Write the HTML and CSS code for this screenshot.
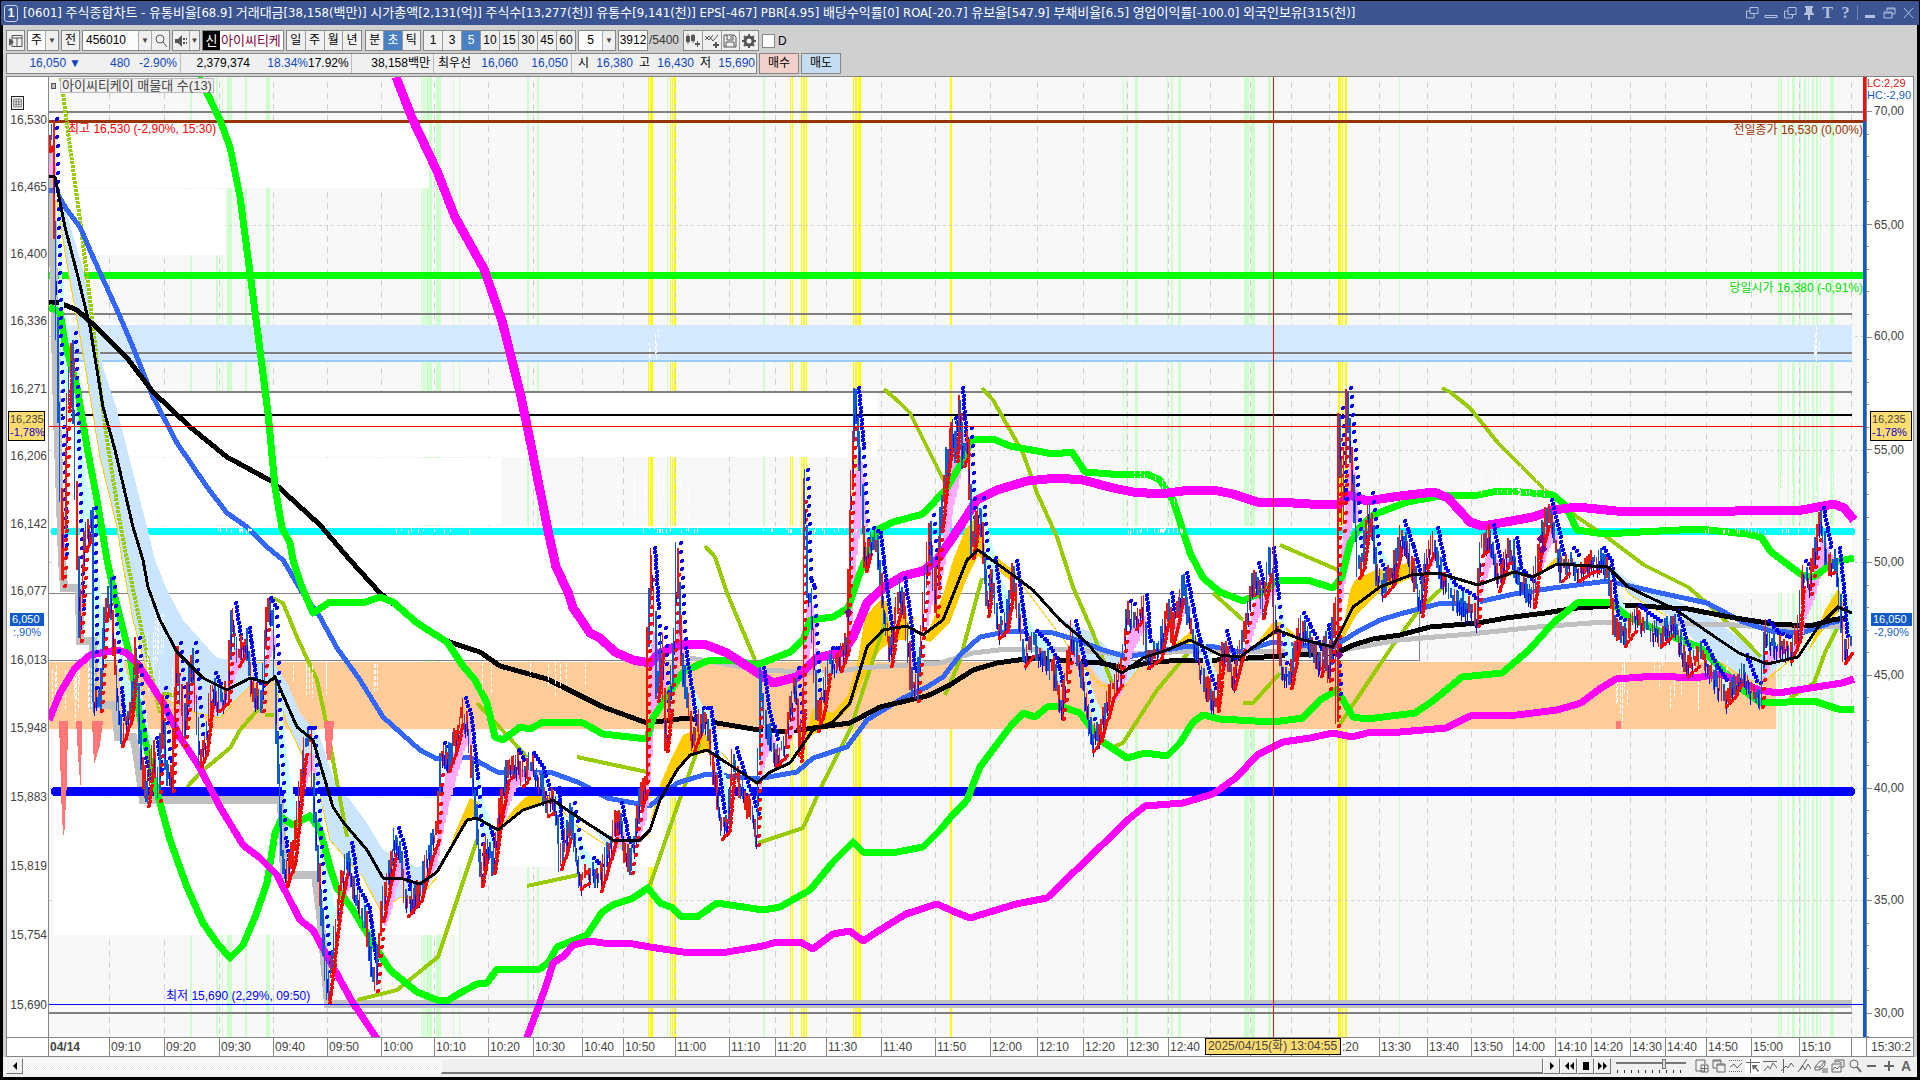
FILE: index.html
```html
<!DOCTYPE html>
<html lang="ko">
<head>
<meta charset="utf-8">
<title>[0601] 주식종합차트</title>
<link rel="stylesheet" href="styles.css">
</head>
<body>
<div class="window">
  <header class="titlebar">
    <span class="badge">1</span>
    <h1>[0601] 주식종합차트 - 유통비율[68.9] 거래대금[38,158(백만)] 시가총액[2,131(억)] 주식수[13,277(천)] 유통수[9,141(천)] EPS[-467] PBR[4.95] 배당수익률[0] ROA[-20.7] 유보율[547.9] 부채비율[6.5] 영업이익률[-100.0] 외국인보유[315(천)]</h1>
    <div class="winbtns">
      <button aria-label="창 분리"><svg viewBox="0 0 14 14"><path d="M5 1.500h8v6H5zM9 7v5H1.500V5H5"/></svg></button>
      <button aria-label="숨김"><svg viewBox="0 0 14 14"><path d="M1 9.500h12v2H1z"/></svg></button>
      <button aria-label="복사"><svg viewBox="0 0 14 14"><path d="M5 1.500h8v7H5zM1.500 5v7h8V9M1.500 5H5"/></svg></button>
      <button aria-label="고정"><svg viewBox="0 0 14 14"><path class="solid" d="M3 0h8v2h-1v4l2 2v1H2V8l2-2V2H3zM6 9h2v5H6z"/></svg></button>
      <button class="glyph" aria-label="글꼴">T</button>
      <button class="glyph" aria-label="도움말">?</button>
      <i></i>
      <button aria-label="최소화"><svg viewBox="0 0 14 14"><path class="solid" d="M2 9h10v3H2z"/></svg></button>
      <button aria-label="이전 크기"><svg viewBox="0 0 14 14"><path d="M5 5V2h8v6h-3M2 6h8v6H2zM2 7h8M5 3h8"/></svg></button>
      <button aria-label="닫기"><svg viewBox="0 0 14 14"><path d="M3 2l9 10M12 2L3 12"/></svg></button>
    </div>
  </header>

  <main class="body">
    <div class="toolbar">
      <button class="box ic w20" aria-label="패널"><svg viewBox="0 0 16 16"><path d="M4 2.500h10v11H4zM4 5h10M9 5v8"/><path class="solid" d="M1 5l5 4-5 4z"/></svg></button>
      <div class="box split w32"><span>주</span><button class="drop" aria-label="주기 선택">▼</button></div>
      <button class="box w20">전</button>
      <div class="box split w88"><input class="code" value="456010" aria-label="종목코드"><button class="drop" aria-label="종목 목록">▼</button><button class="ic find" aria-label="종목 찾기"><svg viewBox="0 0 16 16"><circle cx="7" cy="6" r="4"/><path d="M10 9l4 5"/></svg></button></div>
      <div class="box split w28"><button class="ic sound" aria-label="음성"><svg viewBox="0 0 16 16"><path class="solid" d="M2 6h3l4-4v12L5 10H2zM10 5h2v2h-2zM13 5h1v2h-1zM10 9h2v2h-2zM13 9h1v2h-1z"/></svg></button><button class="drop" aria-label="음성 설정">▼</button></div>
      <div class="box name"><b>신</b><span>아이씨티케</span></div>
      <div class="box seg w76"><button>일</button><button>주</button><button>월</button><button>년</button></div>
      <div class="box seg w56 gap"><button>분</button><button class="on">초</button><button>틱</button></div>
      <div class="box seg w152"><button>1</button><button>3</button><button class="on">5</button><button>10</button><button>15</button><button>30</button><button>45</button><button>60</button></div>
      <div class="box split w38"><span>5</span><button class="drop" aria-label="간격 선택">▼</button></div>
      <input class="box count" value="3912" aria-label="조회 개수"><span class="total">/5400</span>
      <div class="box seg w76">
        <button class="ic" aria-label="종목 추가"><svg viewBox="0 0 16 16"><path class="solid" d="M1 3h4v6H1zM6 2h4v6H6zM10 10h5v2h-5zM12 8h1v6h-1z"/><path d="M3 1v10M8 1v9"/></svg></button>
        <button class="ic" aria-label="지표 추가"><svg viewBox="0 0 16 16"><path d="M1 7l4-4 4 5 5-6M1 3l4 4 4-5"/><path d="M9 12h6M12 9v6" stroke-width="2"/></svg></button>
        <button class="ic" aria-label="저장"><svg viewBox="0 0 16 16"><path d="M2 2h10l2 2v10H2zM5 2v5h6V2M4 14V9h8v5M9 3v3"/></svg></button>
        <button class="ic" aria-label="설정"><svg viewBox="0 0 16 16"><circle cx="8" cy="8" r="4" stroke-width="3"/><path d="M8 1v3M8 12v3M1 8h3M12 8h3M3 3l2 2M11 11l2 2M13 3l-2 2M3 13l2-2" stroke-width="2"/></svg></button>
      </div>
      <label class="dcheck"><input type="checkbox">D</label>
    </div>

    <div class="quote">
      <div class="box cells">
        <span class="q1 dn">16,050<i>▼</i></span><span class="q2 dn">480</span><span class="q2 dn sep">-2.90%</span>
        <span class="q3">2,379,374</span><span class="q4 dn">18.34%</span><span class="q5 sep">17.92%</span>
        <span class="q6 sep">38,158백만</span>
        <span class="q7">최우선</span><span class="q2 dn">16,060</span><span class="q8 dn sep">16,050</span>
        <span class="lab">시</span><span class="dn">16,380</span><span class="lab">고</span><span class="dn">16,430</span><span class="lab">저</span><span class="dn">15,690</span>
      </div>
      <button class="box trade buy">매수</button>
      <button class="box trade sell">매도</button>
    </div>

    <section class="chart">
      <div class="left-axis">
        <span><button class="grid-btn" aria-label="데이터 표"><svg viewBox="0 0 12 14"><path d="M1.500 2.500h9v9h-9zM1.500 5.500h9M1.500 8.500h9M4.500 2.500v9M7.500 2.500v9"/></svg></button></span>
        <span>16,530</span><span>16,465</span><span>16,400</span><span>16,336</span><span>16,271</span><span>16,206</span><span>16,142</span><span>16,077</span><span>16,013</span><span>15,948</span><span>15,883</span><span>15,819</span><span>15,754</span><span>15,690</span>
        <div class="tag cursor">16,235<em>-1,78%</em></div>
        <div class="tag now"><b>6,050</b><em>:,90%</em></div>
      </div>

      <div class="plot">
        <svg class="canvas" viewBox="49 77 1817 960" preserveAspectRatio="none" shape-rendering="crispEdges">
          <g id="stripes"></g>
          <g id="gridlines"></g>
          <g class="profile">
            <path d="M54 123h375v65H54zM54 189h171v66H54zM54 323h81v67H54zM54 392h823v65H54zM54 458h447v67H54zM54 526h1798v67H54zM49 594h1370v67H49zM54 729h698v68H54zM54 798h608v69H54zM54 867h405v68H54z"/>
          </g>
          <path fill="#d4e9ff" d="M54 325H1852V360H54z"/>
          <path fill="#fc9" d="M49 662H1776V729H49z"/>
          <g class="hl">
            <path stroke="#808080" stroke-width="2" d="M49 112H1863M54 314H1852M54 353H1852M54 392H1852M49 1013H1852"/>
            <path stroke="#99ccff" stroke-width="2" d="M54 361H1852"/>
            <path stroke="#808080" d="M49 593.500H1419.500V660.500H49"/>
            <path stroke="#930" stroke-width="3" d="M49 121.500H1863"/>
            <path stroke="#0f0" stroke-width="7" d="M49 275.500H1863"/>
            <path stroke="#000" stroke-width="2" d="M54 415H1852"/>
            <path stroke="#0ff" stroke-width="7" stroke-linecap="round" d="M54 531.500H1852"/>
          </g>
          <path class="low" d="M51 150L54 290L57 415L62 560L64 588H79L80 641H93V705H115L118 737H133L136 750L143 800H281L284 875H315L320 913L328 1004H1852"/>
          <g class="sky">
            <path d="M55 177L60 190L83 270L103 367L117 410L147 527L155 560L167 590L183 620L217 658L260 663H273L287 683L300 713L320 737L333 777L350 800L367 823L383 850L417 867L443 860L437 872L420 897L400 898L380 910L363 877L347 860L330 840L313 767L303 757L287 723L273 680L263 688L253 683L233 703L220 718L193 712L153 693L133 620L122 560L117 527L100 457L83 353L68 270z"/>
            <path d="M1060 618L1090 632L1110 650L1128 658L1140 668L1120 690L1100 680L1083 655z"/>
            <path d="M1610 565L1628 580L1676 600L1715 620L1739 638L1761 655L1785 658L1761 685L1735 672L1700 645L1665 612L1630 595z"/>
            <path d="M590 825L612 836L640 838L625 850L610 849z"/>
          </g>
          <g fill="#fc0">
            <path d="M443 865L455 833L470 798L478 802V818H467L437 872zM500 828L513 810L525 797L543 793L553 800L523 812zM650 822L660 785L672 757L683 735L700 728L712 742L707 752L690 757L677 772L660 802zM790 765L803 745L813 708L833 713L848 695L857 665L865 617L880 600L895 603L915 618L907 640L893 640L880 650L867 672L850 707L833 725L812 735zM925 640L943 595L953 560L965 530L975 518L985 545L1000 560L1018 574L1010 580L978 556L967 578L950 622L930 642zM1165 652L1190 632L1208 648L1190 643zM1256 644L1273 622H1280L1302 640L1277 634zM1340 645L1350 590L1355 580L1375 570L1395 568L1410 561L1424 572L1380 592L1357 614zM1495 582L1517 566L1533 576L1517 573zM1538 576L1557 556L1575 564H1557zM1808 652L1825 610L1838 589L1848 605L1838 612L1820 634z"/>
          </g>
          <g class="ma">
            <g stroke="#fc0" stroke-width="1"><path d="M55 190L68 270L83 353L100 457L117 527L122 560L133 620L153 693L193 712L220 718L233 703L253 683L263 688L273 680L287 723L303 757L313 767L330 840L347 860L363 877L380 910L400 898L420 897L437 877M553 800L575 825L612 849L650 835M712 742L730 762L757 785M1015 575L1060 635L1083 665L1100 685L1122 690L1147 658M1610 567L1630 595L1665 615L1700 650L1735 672L1761 685L1790 660"/></g>
            <g stroke="#99cc00" stroke-width="4">
              <path stroke-dasharray="3 1" d="M61 78L63 93L70 147L80 220L90 300L97 363L107 440L120 523L127 560L143 637L160 713"/>
              <path d="M162 694L175 695M187 787L200 773L230 748L240 730L260 707M265 715H274M273 598L283 603L297 637L317 680L325 717L333 760L347 837M357 1000L397 990L438 957L477 840M477 703L527 757M527 886L578 875M577 757L647 772M650 885L677 807L700 743M705 546L715 557L727 593L755 660M758 843L803 828L823 783L850 730L887 617M884 389L900 403L910 413L945 483M982 388L993 400L1023 453L1037 493L1057 537L1073 587L1093 633L1112 683M945 695L960 660L982 578M1113 747L1123 743L1157 690L1188 653M1213 593L1243 620M1243 703H1253L1280 673M1280 545L1338 570M1338 727L1393 645L1419 610L1442 588M1442 388L1450 392L1470 408L1498 443L1545 490L1577 517L1608 538L1644 565L1688 587L1715 610L1761 657M1790 698L1814 683L1826 650L1838 627"/>
            </g>
            <path stroke="silver" stroke-width="5" d="M690 658L760 670L827 673L860 668L940 663L973 653L1007 649H1067L1117 654L1200 651H1277L1343 650L1399 640L1470 634L1537 627L1604 622L1735 625L1774 628L1852 626"/>
            <path stroke="#36f" stroke-width="5" d="M49 190H55L67 210L80 227L93 257L117 310L133 347L153 397L177 443L207 487L227 513L247 527L267 547L283 560L302 592L320 617L337 648L360 680L383 717L420 750L437 759L470 757L497 772H550L580 783L607 798L650 806L677 783L707 774L757 779L797 772L813 758L847 747L867 720L903 698L927 687L943 677L960 655L980 637L1010 631L1053 633L1077 640L1103 650L1127 657L1183 647L1210 646L1240 652L1273 642L1293 645L1333 647L1357 632L1380 620L1400 614L1438 604L1478 602L1514 594L1553 588L1608 581L1656 592L1707 603L1743 622L1771 631L1802 633L1830 623L1852 618"/>
            <path stroke="#000" stroke-width="5" d="M49 302L60 303L77 310L97 328L127 358L153 392L190 427L227 457L273 482L320 525L350 560L380 593L417 623L443 640L480 652L500 666L547 679L603 707L647 723L687 718L753 729L787 732L820 727L850 723L880 707L927 696L950 685L973 670L997 663L1033 658L1100 663L1127 668L1147 663L1180 660L1217 660L1280 656L1337 653L1353 645L1373 639L1400 635L1430 627L1478 623L1506 618L1545 613L1577 608L1624 605L1688 609L1735 618L1774 624L1810 626L1832 620L1852 617"/>
            <path stroke="#00f" stroke-width="9" stroke-linecap="round" d="M55 791.500H1851"/>
          </g>
          <g id="ribbon"></g>
          <g class="ma" stroke="#0f0" stroke-width="7">
            <path d="M199 77L207 93L220 120L230 147L240 197L250 273L260 350L268 413L275 487L282 528L290 543L293 560L302 587L313 613L330 602L363 603L380 597L393 602L417 623L447 642L463 666L475 680L487 703L495 737L503 740L520 727L530 729L543 722L583 723L603 734L647 739L653 718L673 687L683 672L707 661L730 660L757 665L790 652L803 640L810 620L833 617L848 608L860 573L877 530L893 522L923 514L947 488L960 465L972 440L993 439L1010 446L1053 454L1072 452L1085 472L1123 475L1147 474L1160 480L1173 500L1190 553L1203 578L1220 592L1243 601L1260 593L1277 581L1307 580L1333 588L1342 577L1350 543L1360 527L1373 515L1407 502L1446 495H1478L1498 491L1521 492L1553 495L1565 505L1577 530L1604 534L1640 532L1699 529L1747 534L1761 537L1771 552L1802 575L1814 577L1834 562L1854 558"/>
            <path d="M49 307L60 312L65 343L77 387L87 447L97 500L107 560L115 597L130 657L140 717L153 777L170 840L187 887L203 923L217 943L230 958L243 945L255 917L267 883L275 833L282 818L293 825L310 816L320 830L330 867L337 888L353 910L373 943L390 970L417 992L437 1000L447 1001L460 993L477 984L487 983L497 969H540L548 963L557 947L587 935L602 912L613 905L633 898L648 888L660 903L673 908L680 916L697 917L717 903L763 910L780 907L810 890L833 862L853 842L863 852H897L923 847L940 830L950 818L967 800L980 767L1010 727L1023 713L1035 717L1047 707L1060 706L1080 713L1100 740L1127 758L1145 753L1167 756L1180 743L1193 722L1203 715L1220 719L1273 722L1303 718L1320 700L1337 690L1353 717L1367 719L1415 713L1434 700L1462 677L1502 673L1529 650L1553 623L1577 603L1610 602L1628 617L1668 635L1699 647L1723 670L1739 687L1761 703L1814 701L1838 709H1854"/>
          </g>
          <g id="sparks"></g>
          <g class="ma" stroke="#f0f">
            <path stroke-width="9" d="M396 77L412 118L437 171L455 217L484 269L502 321L520 392L530 440L540 490L549 535L556 567L568 592L573 608L580 618L590 633L600 638L615 652L633 660L650 663L660 653L682 644L707 645L727 653L753 670L773 683L797 677L817 658L843 652L853 637L867 603L883 588L903 576L923 571L937 560L953 537L977 500L997 490L1027 481L1057 478L1083 480L1113 488L1133 492L1160 494L1190 490H1213L1233 494L1257 502H1277L1310 504L1338 505L1350 495L1367 501L1400 496L1434 492L1448 498L1470 522L1482 526L1506 522L1533 517L1553 510L1577 507L1616 511L1711 512L1759 510H1802L1834 504L1844 508L1854 520"/>
            <path stroke-width="7" d="M49 720L60 693L75 668L90 655L117 650L127 653L140 667L163 703L180 737L200 768L220 807L243 845L260 858L277 875L300 920L313 930L333 967L353 1003L378 1040M526 1040L538 1008L547 983L553 963L565 955L573 945L590 941L603 943H627L650 947L683 952H727L763 946L777 942H800L813 949L833 934L850 931L863 941L880 930L906 914L937 904L955 912L970 918L1016 904L1047 898L1102 845L1130 818L1145 806L1183 803L1213 794L1237 777L1257 755L1283 742L1310 738L1333 733L1352 737L1367 733L1400 732L1446 728L1470 716L1517 715L1557 710L1581 703L1601 688L1616 679L1656 676L1695 678L1719 674L1739 681L1759 690L1778 693L1810 688L1842 683L1854 679"/>
          </g>
          <g id="candles"></g>
          <path class="thin" d="M49 176L55 177L65 227L78 277L90 327L103 407L115 450L133 527L143 560L148 587L160 620L177 652L203 678L227 690L250 678L267 683L275 677L297 727L313 740L333 807L343 822L367 850L383 878L403 879L420 884L437 872L467 820L477 818L498 830L523 810L553 800L570 812L593 827L613 840H640L650 830L660 800L677 770L690 755L707 750L727 763L757 783L770 772L790 763L813 730L833 722L850 703L867 647L883 630L907 626L923 635L943 620L967 560L978 550L1010 573L1033 590L1060 620L1087 643L1103 662L1122 673L1143 658L1167 650L1190 640L1220 655L1240 657L1277 630L1300 639L1333 647L1353 607L1380 587L1411 575L1438 573L1478 585L1514 572L1533 577L1557 564L1608 567L1628 587L1676 610L1715 637L1739 653L1767 664L1798 657L1818 627L1838 607L1852 613"/>
          <path fill="#f77" d="M59 721h9l-1 59-3 60-2-20zM76 721h6l-1 69-2-20zM92 721h11l-3 24-6 20zM324 721h10l-3 39h-4zM1616 721h5v8h-5z"/>
          <path fill="purple" d="M848 608l5 5h-3v4h-4v-4h-3zM1339 650l4 5-4 5-4-5zM1541 534l4 5-4 5-4-5zM1543 544l4 5-4 5-4-5z"/>
          <path stroke="#00f" d="M49 1004.500H1863"/>
          <path stroke="#f00" d="M49 426.500H1863M1273.500 77V1037"/>
          <path fill="#0f5bcc" d="M1863 77h3v960h-3z"/>
          <path fill="#f01010" d="M1863 77h3v44h-3z"/>
        </svg>
        <div class="note legend"><i></i><span>아이씨티케이 매물대 수(13)</span></div>
        <div class="note high">최고 16,530 (-2,90%, 15:30)</div>
        <div class="note prev">전일종가 16,530 (0,00%)</div>
        <div class="note open">당일시가 16,380 (-0,91%)</div>
        <div class="note lowest">최저 15,690 (2,29%, 09:50)</div>
      </div>

      <div class="right-axis">
        <svg id="ticks" viewBox="0 77 6 960" preserveAspectRatio="none" shape-rendering="crispEdges"></svg>
        <div class="values">
          <span class="lc"><b>LC:2,29</b><em>HC:-2,90</em></span><span>70,00</span><span>65,00</span><span>60,00</span><span>55,00</span><span>50,00</span><span>45,00</span><span>40,00</span><span>35,00</span><span>30,00</span>
        </div>
        <div class="tag cursor">16,235<em>-1,78%</em></div>
        <div class="tag now"><b>16,050</b><em>-2,90%</em></div>
      </div>

      <div class="corner"></div>
      <div class="times">
        <b>04/14</b><span>09:10</span><span>09:20</span><span>09:30</span><span>09:40</span><span>09:50</span><span>10:00</span><span>10:10</span><span>10:20</span><span>10:30</span><span>10:40</span><span>10:50</span><span>11:00</span><span>11:10</span><span>11:20</span><span>11:30</span><span>11:40</span><span>11:50</span><span>12:00</span><span>12:10</span><span>12:20</span><span>12:30</span><span>12:40</span><span></span><span></span><span></span><span class="tail">:20</span><span>13:30</span><span>13:40</span><span>13:50</span><span>14:00</span><span>14:10</span><span>14:20</span><span>14:30</span><span>14:40</span><span>14:50</span><span>15:00</span><span>15:10</span><span></span>
        <div class="stamp">2025/04/15(화) 13:04:55</div>
      </div>
      <div class="corner last">15:30:2</div>
    </section>

    <footer class="bottom">
      <button class="sb" aria-label="왼쪽으로"><svg viewBox="0 0 10 10"><path class="solid" d="M7 1v8L3 5z"/></svg></button>
      <div class="track"><div class="thumb"></div></div>
      <button class="sb" aria-label="재생"><svg viewBox="0 0 10 10"><path class="solid" d="M3 1v8l4-4z"/></svg></button>
      <button class="sb" aria-label="뒤로"><svg viewBox="0 0 10 10"><path class="solid" d="M5 1v8L1 5zM10 1v8L6 5z"/></svg></button>
      <button class="sb" aria-label="정지"><svg viewBox="0 0 10 10"><path class="solid" d="M2 1h6v8H2z"/></svg></button>
      <button class="sb" aria-label="앞으로"><svg viewBox="0 0 10 10"><path class="solid" d="M0 1v8l4-4zM5 1v8l4-4z"/></svg></button>
      <input class="speed" type="range" min="0" max="10" value="7" aria-label="속도">
      <div class="tools">
        <button aria-label="새 차트"><svg viewBox="0 0 14 14"><path d="M9 12H1V1h9v4M6 6h7v7H6zM6 9.500h7M9.500 6v7"/></svg></button>
        <button aria-label="겹치기"><svg viewBox="0 0 14 14"><path d="M5 9H1V1h8v4M5 5h8v8H5zM5 6h8M1 2h8"/></svg></button>
        <button aria-label="영역"><svg viewBox="0 0 14 14"><path stroke-dasharray="1 1" d="M0 1.500h14M0 12.500h14"/><path d="M1 8l4-3 3 4 5-5"/></svg></button>
        <button class="on" aria-label="선택"><svg viewBox="0 0 14 14"><path d="M0 3.500h14M4.500 0v14"/><path class="solid" d="M6 6h6l-2 2 3 4-1 1-3-4-2 2z"/></svg></button>
        <button aria-label="수평선"><svg viewBox="0 0 14 14"><path d="M0 2.500h14M1 12l4-5 2 3 3-6 4 5"/></svg></button>
        <button aria-label="수직선"><svg viewBox="0 0 14 14"><path d="M3.500 0v14M1 12l5-5 2 2 3-5 3 4"/></svg></button>
        <button aria-label="추세선"><svg viewBox="0 0 14 14"><path d="M1 13L10 0M3 11l3-4 2 4 3-6 3 5"/></svg></button>
        <button aria-label="모두 지우기"><svg viewBox="0 0 14 14"><path d="M1 8l5-6h5L6 8zM1 8v3h5V8M6 11l5-5V2M9 9v5M11 9v5M13 9v5"/></svg></button>
        <button aria-label="화면 저장"><svg viewBox="0 0 14 14"><path d="M4 4V1h9v7h-3M1 5h9v8H1zM2 11l2-3 2 2 3-3M5 3l2-1 4 2"/></svg></button>
        <button aria-label="돋보기"><svg viewBox="0 0 14 14"><circle cx="6" cy="5" r="4"/><path d="M9 8l4 5" stroke-width="2"/></svg></button>
        <button aria-label="축소"><svg viewBox="0 0 14 14"><path d="M2 7h9" stroke-width="2"/></svg></button>
        <button aria-label="확대"><svg viewBox="0 0 14 14"><path d="M2 7h10M7 2v10" stroke-width="2"/></svg></button>
        <button class="auto" aria-label="자동">A</button>
      </div>
    </footer>
  </main>
</div>
<script src="chart.js"></script>
</body>
</html>
```
FILE: styles.css
```css
* { box-sizing: border-box; }
body {
  margin: 0;
  background: #000;
  color: #000;
  font: 12px/16px "Liberation Sans", "Noto Sans CJK KR", sans-serif;
}
button, input { font: inherit; color: inherit; margin: 0; padding: 0; border: 0; background: none; }
em, i { font-style: normal; }
svg { display: block; fill: none; stroke: currentColor; }
svg .solid { fill: currentColor; stroke: none; }

.window { display: flex; flex-direction: column; height: 100vh; padding: 1px 1px 3px; }
.titlebar { display: flex; align-items: center; height: 24px; flex: none; padding: 0 4px 0 3px; gap: 5px; background: #3a5592; color: #fff; }
.titlebar h1 { flex: 1; margin: 0; font: 400 13px/20px "DejaVu Sans Condensed", "Noto Sans CJK KR", sans-serif; white-space: nowrap; overflow: hidden; }
.badge { width: 14px; height: 17px; border: 1px solid #c8d4ee; border-radius: 3px; text-align: center; line-height: 15px; font-weight: 700; }
.winbtns { display: flex; align-items: center; gap: 5px; color: #b4c0dc; }
.winbtns svg { width: 14px; height: 14px; }
.winbtns i { width: 1px; height: 14px; background: #7588b5; }
.glyph { width: 13px; font: 700 16px/16px "Liberation Serif", serif; }

.body { flex: 1; min-height: 0; display: flex; flex-direction: column; margin: 0 2px; padding: 5px 3px 0; background: #d0d0d0; }
.toolbar, .quote { display: flex; height: 21px; flex: none; white-space: nowrap; }
.toolbar { gap: 2px; margin-bottom: 2px; }
.box { border: 1px solid #868686; background: #f0f0f0; text-align: center; line-height: 19px; }
.w20 { width: 19px; } .w28 { width: 28px; } .w32 { width: 32px; } .w38 { width: 38px; }
.w56 { width: 56px; } .w76 { width: 76px; } .w88 { width: 88px; } .w152 { width: 153px; }
.split { display: flex; }
.split > span, .split > input { flex: 1; min-width: 0; background: #fcfcfc; }
.code { padding-left: 3px; }
.drop { width: 13px; border-left: 1px solid #aaa; background: #f0f0f0; color: #444; font-size: 8px; }
.ic svg { width: 16px; height: 16px; margin: auto; color: #555; }
.find { width: 18px; border-left: 1px solid #aaa; }
.sound { flex: 1; }
.name { display: flex; width: 82px; color: #800040; background: #fff; text-align: left; font-size: 13px; }
.name b { flex: none; width: 17px; background: #000; color: #fff; font-weight: 400; text-align: center; margin-right: 1px; }
.seg { display: flex; }
.seg button { flex: 1; border-left: 1px solid #999; }
.seg button:first-child { border-left: 0; }
.seg .on { background: #4a80c4; color: #fff; }
.gap { margin-left: 1px; }
.count { width: 30px; background: #fff; }
.total { width: 32px; line-height: 21px; color: #333; margin-left: -1px; }
.dcheck { display: flex; align-items: center; gap: 3px; margin-left: 1px; }
.dcheck input { appearance: none; width: 13px; height: 14px; background: #fff; border: 1px solid #868686; }

.quote { gap: 2px; margin-bottom: 2px; }
.cells { display: flex; width: 751px; text-align: right; }
.cells span { width: 44px; }
.cells .q1 { width: 76px; padding-right: 2px; }
.cells .q1 i { margin-left: 3px; }
.cells .q2 { width: 47px; }
.cells .q3 { width: 69px; }
.cells .q4 { width: 58px; }
.cells .q5 { width: 44px; }
.cells .q6 { width: 82px; }
.cells .q7 { width: 37px; }
.cells .q8 { width: 54px; }
.cells .lab { width: 17px; }
.cells .sep { border-right: 1px solid #bbb; padding-right: 3px; }
.cells .q2.sep { width: 51px; }
.dn { color: #0f47c0; }
.trade { width: 40px; }
.buy { background: #f4d0cb; }
.sell { background: #c5dcf1; }

.chart { flex: 1; min-height: 0; display: grid; grid-template: minmax(0, 1fr) 19px / 42px minmax(0, 1fr) 47px; border: 1px solid #868686; background: #fff; color: #444; }
.left-axis { position: relative; display: grid; grid-template-rows: 35fr 67fr 67fr 67fr 68fr 67fr 68fr 67fr 69fr 68fr 69fr 69fr 69fr 70fr 40fr; border-right: 1px solid #868686; text-align: right; padding-right: 1px; }
.left-axis span { min-height: 0; }
.grid-btn { display: block; margin: 19px 0 0 4px; border: 1px solid #222; background: #f0f0f0; }
.grid-btn svg { width: 11px; height: 12px; color: #777; }
.tag { position: absolute; white-space: nowrap; text-align: left; font-size: 11px; line-height: 13px; }
.tag em, .tag b { display: block; font-weight: 400; }
.cursor { top: 34.800%; left: 1px; right: 3px; height: 30px; padding: 1px; border: 1px solid #000; background: #ffdc70; }
.cursor em { color: #00c; }
.now { top: 55.800%; left: 3px; right: 4px; }
.now b { background: #0f5bcc; color: #fff; padding-left: 2px; }
.now em { color: #0f5bcc; padding-left: 3px; }
.right-axis .cursor { left: 4px; right: 1px; }
.right-axis .now { left: 5px; right: 1px; }

.plot { position: relative; background: #f8f8f8; min-height: 0; }
.canvas { position: absolute; inset: 0; width: 100%; height: 100%; stroke: none; }
.profile { fill: #fff; }
.ma { fill: none; stroke-linejoin: round; }
.sky { fill: #cce5ff; }
.low { stroke: silver; stroke-width: 8; }
.thin { stroke: #000; stroke-width: 3; }
.vgrid { stroke: #d0d0d0; stroke-dasharray: 6 5; }
.hgrid { stroke: #d0d0d0; stroke-dasharray: 3 3; }
.note { position: absolute; white-space: nowrap; }
.legend { top: 1px; left: 2px; display: flex; align-items: center; gap: 4px; font-size: 13px; }
.legend i { width: 5px; height: 6px; border: 1px solid #555; background: #bbb; }
.legend span { padding: 0 1px; border: 1px solid #bbb; background: #f0f0f0; line-height: 13px; }
.high { top: 4.600%; left: 19px; color: #f00; }
.prev { top: 4.700%; right: 3px; color: #930; }
.open { top: 21.100%; right: 3px; color: #0d0; }
.lowest { top: 94.900%; left: 117px; color: #00f; }

.right-axis { position: relative; display: grid; grid-template-columns: 6px 1fr; }
#ticks { width: 6px; height: 100%; stroke: #868686; }
.values { display: grid; grid-template-rows: 26fr 114fr 111fr 114fr 112fr 113fr 113fr 112fr 113fr 32fr; }
.values span { min-height: 0; padding-left: 2px; }
.values .lc { padding: 0; margin-left: -5px; font-size: 11px; line-height: 12px; white-space: nowrap; }
.lc b { display: block; color: #e01010; font-weight: 400; }
.lc em { color: #0f5bcc; }

.times, .corner { border-top: 1px solid #868686; line-height: 18px; }
.times { position: relative; display: grid; grid-template-columns: 60fr 55fr 55fr 54fr 54fr 54fr 53fr 54fr 45fr 49fr 41fr 52fr 54fr 46fr 51fr 55fr 54fr 55fr 47fr 46fr 44fr 41fr 42fr 40fr 41fr 38fr 50fr 48fr 44fr 42fr 42fr 36fr 39fr 35fr 41fr 45fr 48fr 52fr 15fr; }
.times span, .times b { min-width: 0; border-left: 1px solid #868686; padding-left: 1px; }
.times > :first-child { margin-left: -1px; }
.times .tail { padding-left: 12px; }
.stamp { position: absolute; top: 0; left: 63.600%; width: 136px; height: 17px; border: 1px solid #000; background: #ffdc70; line-height: 15px; text-align: center; white-space: nowrap; }
.last { border-left: 1px solid #868686; padding-left: 4px; }

.bottom { display: flex; flex: none; height: 20px; margin: 0 -3px; padding: 1px 3px 3px; background: #f0f0f0; }
.sb { width: 17px; background: #f0f0f0; border: 1px solid #fff; border-right-color: #777; border-bottom-color: #777; }
.sb svg { width: 10px; height: 10px; margin: auto; }
.track { flex: 1; display: flex; background: repeating-conic-gradient(#eee 0 25%, #fff 0 50%) 0 0 / 2px 2px; }
.thumb { width: 72.500%; margin-left: auto; background: #f0f0f0; border: 1px solid #fff; border-right-color: #777; border-bottom: 2px solid #777; }
.speed { appearance: none; width: 70px; height: 15px; margin: 0 8px 0 5px; background: linear-gradient(#777 0 0) 0 4px / 100% 2px no-repeat, repeating-linear-gradient(90deg, #333 0 1px, transparent 1px 7px) 1px 12px / 100% 3px no-repeat; }
.speed::-webkit-slider-thumb { appearance: none; width: 4px; height: 10px; background: #ddd; border: 1px solid #777; margin-top: -4px; }
.tools { display: flex; gap: 1px; color: #666; }
.tools button { width: 16px; }
.tools svg { width: 14px; height: 14px; margin: auto; }
.tools .on { background: #fff; }
.tools .auto { font-size: 14px; font-weight: 700; }
```
FILE: chart.js
```js
const el = id => document.getElementById(id);
let seed = 7;
const rnd = () => (seed = (seed * 16807) % 2147483647) / 2147483647;

// signal stripes: [x, width]
const green = [[190,2],[216,2],[222,1],[227,5],[245,2],[266,4],[421,1],[423,2],[426,6],[436,5],[453,1],[459,1],[527,2],[537,2],[667,1],[763,2],[1123,1],[1126,1],[1135,3],[1167,1],[1171,2],[1178,3],[1244,5],[1251,4],[1268,3],[1399,1],[1778,1],[1780,2],[1788,1],[1792,3],[1799,2],[1804,2],[1808,1],[1812,2],[1816,2],[1820,1],[1830,4]];
const yellow = [[648,1],[650,3],[670,1],[672,1],[674,2],[790,1],[792,1],[801,1],[803,2],[806,1],[853,1],[855,2],[858,3],[950,2],[1338,3],[1342,1],[1345,2]];
const bars = (list, c) => list.map(([x, w]) => `<rect x="${x}" y="77" width="${w}" height="960" fill="${c}"/>`).join('');
el('stripes').innerHTML = bars(green, '#cfc') + bars(yellow, '#ff0');

const vx = [109,164,219,273,327,381,434,488,533,582,623,675,729,775,826,881,935,990,1037,1083,1127,1168,1210,1250,1291,1329,1379,1427,1471,1513,1555,1591,1630,1665,1706,1751,1799,1851];
const hy = [225,336,450,562,675,788,900];
el('gridlines').innerHTML =
  vx.map(x => `<path class="vgrid" d="M${x}.5 82V1037"/>`).join('') +
  hy.map(y => `<path class="hgrid" d="M49 ${y}.5H1863"/>`).join('');

let t = '<path d="M.5 77V1037"/>';
for (let i = 0; i <= 41; i++) t += `<path d="M0 ${Math.round(111 + i * 22.55)}.5H${i % 5 ? 3 : 6}"/>`;
el('ticks').innerHTML = t;

// price swings: x,y pairs
const swing = `49,140 53,131 57,330 63,575 68,400 72,345 78,560 80,630 85,540 92,520 93,700 100,700 105,610 110,590 118,700 121,735 131,705 136,650 142,770 147,795 153,750 159,790 162,700 166,770 172,780 177,655 184,735 192,655 200,755 206,740 212,685 218,700 228,690 232,615 238,655 246,640 252,690 262,700 267,610 273,620 277,740 282,850 286,875 294,850 300,790 305,740 311,740 317,850 322,920 328,992 333,950 340,890 348,855 355,900 366,920 372,970 376,980 382,910 390,870 395,840 401,860 407,905 420,890 430,850 437,830 441,755 448,760 455,740 462,710 468,730 474,790 481,875 487,840 493,862 500,810 507,770 515,762 522,775 530,765 540,780 547,805 555,800 560,858 566,840 571,815 580,878 590,870 600,880 612,840 618,815 625,850 631,862 640,800 646,780 648,640 651,560 655,620 657,690 662,640 666,740 670,700 675,630 677,555 682,660 688,700 693,740 700,720 707,720 712,760 718,800 721,828 728,820 733,760 742,790 750,810 757,834 760,680 765,720 775,755 785,745 795,680 800,750 803,700 804,482 807,590 811,600 817,720 823,700 829,660 840,660 847,640 850,520 855,400 860,460 865,560 870,540 877,545 883,600 890,655 897,610 901,590 907,630 911,680 917,690 922,627 930,527 936,605 941,520 947,460 952,430 956,450 959,400 963,455 968,440 972,547 977,515 980,510 987,605 992,570 998,627 1006,620 1013,573 1018,613 1024,655 1033,643 1043,653 1053,670 1062,708 1072,633 1082,677 1092,740 1100,730 1112,687 1120,675 1127,613 1135,618 1143,607 1147,657 1160,647 1168,605 1172,633 1183,585 1188,613 1195,647 1205,680 1212,700 1217,700 1223,643 1233,678 1243,640 1255,575 1262,607 1270,560 1275,610 1283,675 1290,677 1300,625 1313,650 1320,665 1325,637 1329,678 1335,603 1337,715 1339,420 1343,520 1347,400 1353,480 1358,567 1363,557 1369,505 1377,573 1383,585 1393,573 1401,533 1411,563 1421,605 1426,557 1434,540 1442,580 1452,597 1470,607 1477,615 1481,545 1490,537 1498,580 1507,553 1513,550 1517,580 1533,596 1539,547 1548,512 1553,533 1561,570 1570,560 1578,570 1590,562 1600,560 1608,573 1614,627 1624,635 1636,617 1648,627 1660,635 1674,623 1687,665 1700,653 1715,680 1725,695 1733,687 1743,667 1753,693 1761,696 1765,633 1775,645 1790,650 1799,627 1802,573 1810,583 1820,520 1828,563 1836,560 1840,600 1844,652 1852,640`
  .split(' ').map(p => p.split(',').map(Number));

let candles = '', ribbon = '', fast = 176, slow = 185;
for (let i = 1; i < swing.length; i++) {
  const [x0, y0] = swing[i - 1], [x1, y1] = swing[i];
  const up = y1 < y0, steep = Math.abs(y1 - y0) > 60;
  const n = Math.max(1, Math.round((x1 - x0) / 2));
  for (let k = 0; k < n; k++) {
    const x = x0 + Math.round((x1 - x0) * k / n);
    const a = y0 + (y1 - y0) * k / n, b = y0 + (y1 - y0) * (k + 1) / n;
    const top = Math.round(Math.min(a, b) - rnd() * 14), bot = Math.round(Math.max(a, b) + rnd() * 14);
    const c = rnd() < 0.65 === up ? '#e81a0c' : '#0f5bcc';
    candles += `<rect x="${x}" y="${top}" width="${rnd() < 0.6 ? 2 : 1}" height="${bot - top}" fill="${c}"/>`;
    if (rnd() < 0.5) candles += `<rect x="${x + 1}" y="${Math.round((top + bot) / 2)}" width="1" height="14" fill="#00f"/>`;
    const mid = (a + b) / 2;
    fast += (mid - fast) * 0.32;
    slow += (mid - slow) * 0.13;
    const lo = Math.round(Math.min(fast, slow)), h = Math.round(Math.abs(fast - slow));
    if (h > 2) ribbon += `<rect x="${x}" y="${lo}" width="3" height="${h}" fill="${fast < slow ? '#ffaaff' : '#ccffff'}"/>`;
  }
  // stop-and-reverse dots trail each swing
  const len = Math.hypot(x1 - x0, y1 - y0), m = Math.max(1, Math.round(len / (steep ? 9 : 4)));
  for (let k = 0; k < m; k++) {
    const x = Math.round(x0 + (x1 - x0) * k / m) + (up ? 2 : 4);
    const y = Math.round(y0 + (y1 - y0) * k / m) + (up ? 11 : -12);
    candles += `<circle cx="${x}" cy="${y}" r="2" fill="${up ? '#f00' : '#00f'}"/>`;
  }
}
el('ribbon').innerHTML = ribbon;
el('candles').innerHTML = candles;

// white flecks over the volume bands
let s = '';
const flecks = (x0, x1, y0, y1, n, h) => {
  for (let i = 0; i < n; i++) {
    const x = Math.round(x0 + rnd() * (x1 - x0)), y = Math.round(y0 + rnd() * (y1 - y0));
    s += `<path stroke="#fff" stroke-dasharray="4 2" d="M${x}.5 ${y}v${Math.round(h * (0.4 + rnd()))}"/>`;
  }
};
flecks(52, 105, 662, 680, 16, 40);
flecks(145, 175, 590, 670, 12, 40);
flecks(285, 335, 662, 670, 8, 30);
flecks(370, 378, 662, 666, 3, 20);
flecks(475, 600, 662, 665, 8, 26);
flecks(1615, 1632, 640, 690, 8, 30);
flecks(1650, 1740, 640, 690, 14, 28);
flecks(215, 255, 528, 530, 14, 4);
flecks(385, 470, 528, 530, 12, 4);
flecks(640, 700, 528, 530, 16, 4);
flecks(760, 860, 528, 530, 24, 4);
flecks(1120, 1185, 528, 530, 22, 4);
flecks(1690, 1830, 528, 530, 24, 4);
flecks(630, 690, 460, 480, 14, 40);
flecks(1120, 1190, 440, 490, 16, 40);
flecks(1340, 1348, 360, 400, 5, 30);
flecks(1480, 1550, 465, 490, 14, 30);
flecks(1765, 1840, 470, 500, 16, 30);
flecks(648, 658, 325, 350, 5, 20);
flecks(1812, 1822, 325, 350, 5, 20);
el('sparks').innerHTML = s;
```
